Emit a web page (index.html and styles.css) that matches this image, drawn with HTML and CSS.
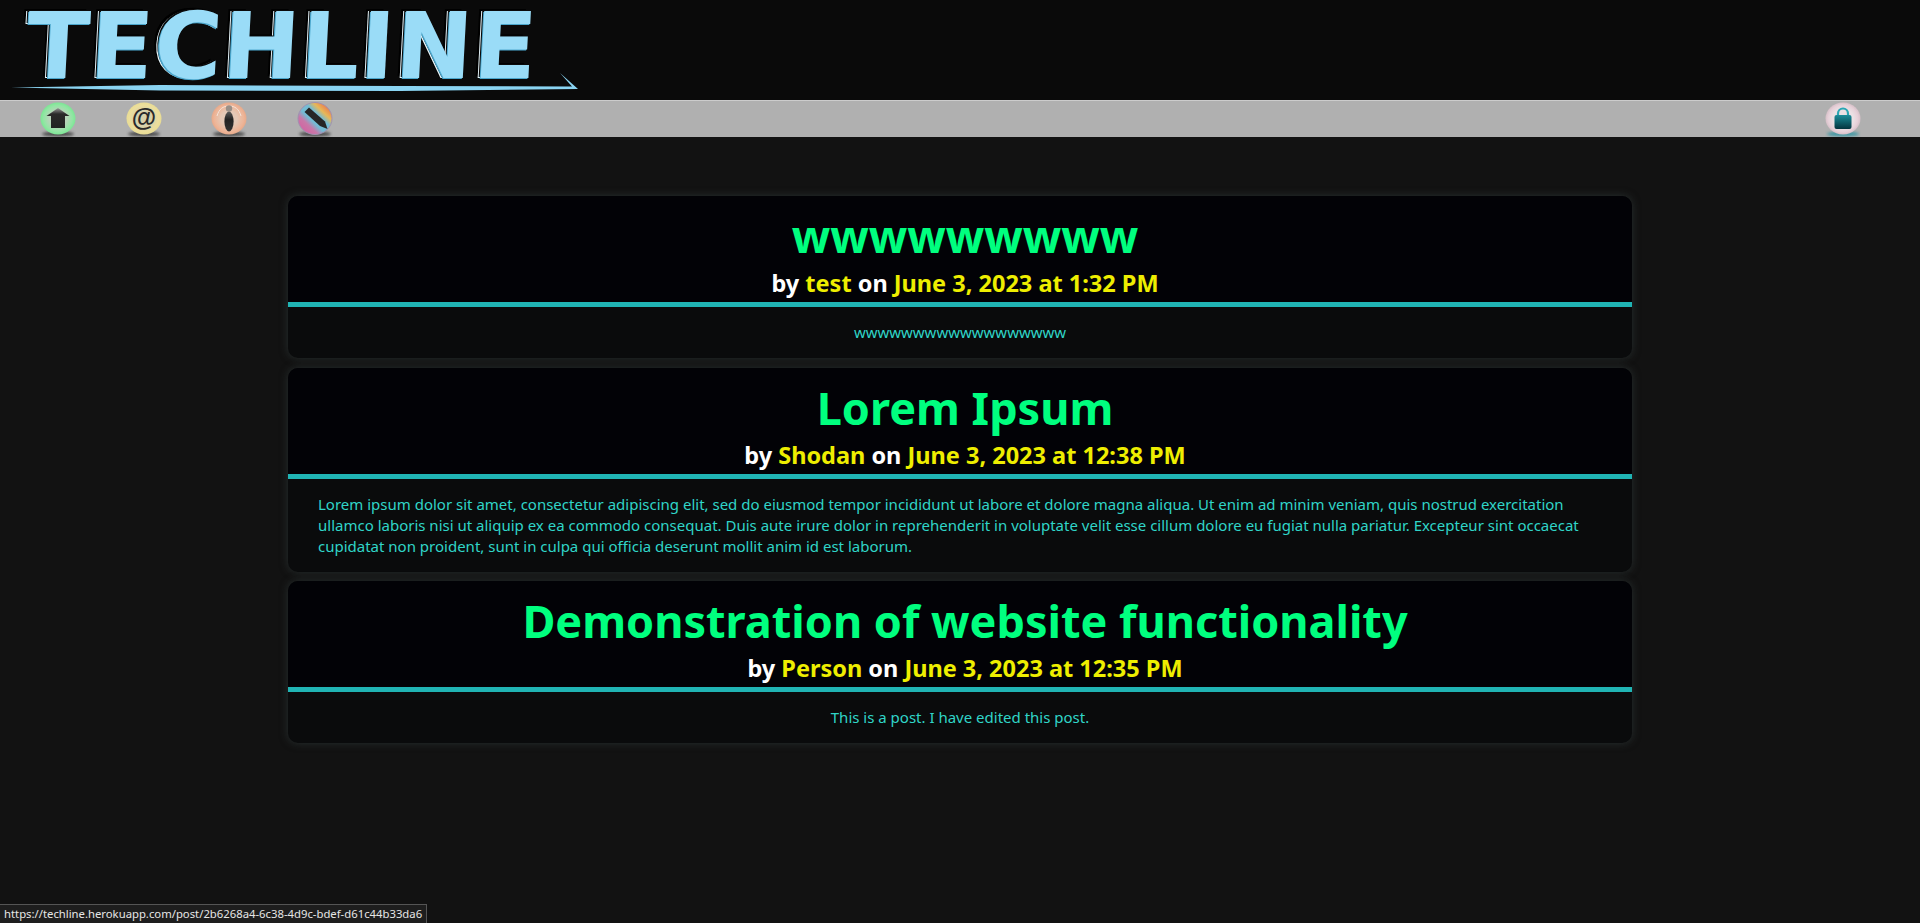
FILE: index.html
```html
<!DOCTYPE html>
<html>
<head>
	<title>Techline</title>
	<link rel="stylesheet" href="styles.css">
</head>
<body>
	<svg class="defs" width="0" height="0">
		<defs>
			<radialGradient id="g_green" cx="50%" cy="50%" r="50%"><stop offset="0.5" stop-color="#b8d4ba"/><stop offset="0.82" stop-color="#92e6a4"/><stop offset="1" stop-color="#7ce694"/></radialGradient>
			<radialGradient id="g_yellow" cx="50%" cy="50%" r="50%"><stop offset="0.5" stop-color="#d8d2ac"/><stop offset="0.82" stop-color="#ecde9c"/><stop offset="1" stop-color="#e8dc94"/></radialGradient>
			<radialGradient id="g_orange" cx="50%" cy="50%" r="50%"><stop offset="0.45" stop-color="#e4c8b6"/><stop offset="0.85" stop-color="#eeb496"/><stop offset="1" stop-color="#e6a98a"/></radialGradient>
			<radialGradient id="g_pink" cx="50%" cy="50%" r="50%"><stop offset="0.6" stop-color="#ebe0e4"/><stop offset="0.85" stop-color="#e6d0d8"/><stop offset="1" stop-color="#d6c0c8"/></radialGradient>
			<linearGradient id="g_lock" x1="0" y1="0" x2="0" y2="1"><stop offset="0" stop-color="#1b8d9a"/><stop offset="1" stop-color="#04343e"/></linearGradient>
			<linearGradient id="g_dark" x1="0" y1="0" x2="0" y2="1"><stop offset="0" stop-color="#9a9a9a"/><stop offset="0.3" stop-color="#2a2a2a"/><stop offset="1" stop-color="#222"/></linearGradient>
			<linearGradient id="g_tie" x1="0" y1="0" x2="0" y2="1"><stop offset="0" stop-color="#5a5a5a"/><stop offset="0.4" stop-color="#222"/><stop offset="1" stop-color="#333"/></linearGradient>
			<linearGradient id="g_rainbow" x1="0" y1="1" x2="1" y2="0"><stop offset="0.05" stop-color="#d85aa0"/><stop offset="0.3" stop-color="#c878a8"/><stop offset="0.42" stop-color="#74bcd4"/><stop offset="0.6" stop-color="#74bcd4"/><stop offset="0.72" stop-color="#e8b858"/><stop offset="1" stop-color="#e84848"/></linearGradient>
			<filter id="blur2" x="-20%" y="-100%" width="140%" height="300%"><feGaussianBlur stdDeviation="1.500"/></filter>
		</defs>
	</svg>

	<header class="top">
		<a class="logo" href="#">
			<span class="logo-text">TECHLINE</span>
			<svg class="swoosh" width="600" height="30" viewBox="0 0 600 30">
				<path d="M11 15.500 L160 13 L400 14 L572 14.500 L560 1 L578 17 L400 19 L160 18.500 Z" fill="#8ad4f2"/>
			</svg>
		</a>
	</header>

	<nav class="bar">
		<a class="ico" href="#">
			<svg width="36" height="36" viewBox="0 0 36 36">
				<ellipse class="drop" cx="18" cy="33" rx="16" ry="2.500"/>
				<ellipse cx="18" cy="17.500" rx="17.500" ry="16" fill="url(#g_green)"/>
				<path d="M18 7 L29.500 15 H25 V27 H11 V15 H6.500 Z" fill="url(#g_dark)"/>
			</svg>
		</a>
		<a class="ico" href="#">
			<svg width="36" height="36" viewBox="0 0 36 36">
				<ellipse class="drop" cx="18" cy="33" rx="16" ry="2.500"/>
				<ellipse cx="18" cy="17.500" rx="17.500" ry="16" fill="url(#g_yellow)"/>
				<text class="at" x="18" y="25">@</text>
			</svg>
		</a>
		<a class="ico" href="#">
			<svg width="36" height="36" viewBox="0 0 36 36">
				<ellipse class="drop" cx="18" cy="33" rx="16" ry="2.500"/>
				<ellipse cx="18" cy="17.500" rx="17.500" ry="16" fill="url(#g_orange)"/>
				<path d="M6 15 C8 8 12 5 18 5 C24 5 28 8 30 15" fill="none" stroke="#f4e4da" stroke-width="1"/>
				<circle cx="18" cy="7.500" r="3.200" fill="#9a9088"/>
				<ellipse cx="18" cy="20.500" rx="4.600" ry="10" fill="url(#g_tie)"/>
			</svg>
		</a>
		<a class="ico" href="#">
			<svg width="36" height="36" viewBox="0 0 36 36">
				<ellipse class="drop" cx="18" cy="33" rx="16" ry="2.500"/>
				<ellipse cx="18" cy="17.500" rx="17" ry="16" fill="url(#g_rainbow)" stroke="#a090b0" stroke-width="1"/>
				<path d="M7.500 11 L12 6.500 L28 20.500 L30.500 28 L23 25 Z" fill="#262626"/>
			</svg>
		</a>
		<a class="ico ico-right" href="#">
			<svg width="36" height="36" viewBox="0 0 36 36">
				<ellipse class="drop drop-teal" cx="18" cy="33" rx="16" ry="2.500"/>
				<ellipse cx="18" cy="17.500" rx="17.500" ry="16" fill="url(#g_pink)"/>
				<path d="M13 15 V12.500 a5 5 0 0 1 10 0 V15" fill="none" stroke="#2aa6b4" stroke-width="2.200"/>
				<rect x="9.500" y="14" width="17" height="14" rx="2" fill="url(#g_lock)"/>
			</svg>
		</a>
	</nav>

	<main class="posts">
		<article class="card">
			<div class="card-head">
				<h1 class="judul">wwwwwwwww</h1>
				<h4 class="meta">by <a href="#">test</a> on <a href="#">June 3, 2023 at 1:32 PM</a></h4>
			</div>
			<div class="card-body center">wwwwwwwwwwwwwwwwww</div>
		</article>
		<article class="card">
			<div class="card-head">
				<h1 class="judul">Lorem Ipsum</h1>
				<h4 class="meta">by <a href="#">Shodan</a> on <a href="#">June 3, 2023 at 12:38 PM</a></h4>
			</div>
			<div class="card-body">Lorem ipsum dolor sit amet, consectetur adipiscing elit, sed do eiusmod tempor incididunt ut labore et dolore magna aliqua. Ut enim ad minim veniam, quis nostrud exercitation ullamco laboris nisi ut aliquip ex ea commodo consequat. Duis aute irure dolor in reprehenderit in voluptate velit esse cillum dolore eu fugiat nulla pariatur. Excepteur sint occaecat cupidatat non proident, sunt in culpa qui officia deserunt mollit anim id est laborum.</div>
		</article>
		<article class="card">
			<div class="card-head">
				<h1 class="judul">Demonstration of website functionality</h1>
				<h4 class="meta">by <a href="#">Person</a> on <a href="#">June 3, 2023 at 12:35 PM</a></h4>
			</div>
			<div class="card-body center">This is a post. I have edited this post.</div>
		</article>
	</main>

	<div class="status">https://techline.herokuapp.com/post/2b6268a4-6c38-4d9c-bdef-d61c44b33da6</div>
</body>
</html>
```

FILE: styles.css
```css
html, body {
	margin: 0;
	height: 100%;
}
body {
	background-color: #121212;
	font-family: "Noto Sans", sans-serif;
	overflow: hidden;
}
a {
	text-decoration: none;
	color: inherit;
}
.defs {
	position: absolute;
}

.top {
	height: 100px;
	background-color: #0a0a0a;
}
.logo {
	position: relative;
	display: block;
	height: 100px;
}
.logo-text {
	display: inline-block;
	padding: 3px 0 0 27px;
	font-family: "DejaVu Sans", sans-serif;
	font-weight: bold;
	font-size: 92px;
	line-height: 88px;
	letter-spacing: 1px;
	white-space: nowrap;
	color: #9adcf7;
	transform: skewX(-3deg);
	text-shadow: -1px 1px 0 #4aa6cc, -2px -1px 0 #0a0a0a, -3px 0 0 #e8f6fb, -5px -2px 0 #000;
}
.swoosh {
	position: absolute;
	left: 0;
	top: 72px;
}

.bar {
	display: flex;
	gap: 49.500px;
	height: 36px;
	padding-left: 40px;
	padding-right: 59px;
	background-color: #b0b0b0;
	border-top: 1px solid #ccc;
}
.ico {
	display: block;
	width: 36px;
	height: 36px;
}
.ico-right {
	margin-left: auto;
}
.drop {
	fill: #4a4a4a;
	filter: url(#blur2);
}
.drop-teal {
	fill: #3f98a4;
}
.at {
	font-family: "Liberation Sans", sans-serif;
	font-size: 25px;
	font-weight: bold;
	text-anchor: middle;
	fill: #2a2a2a;
}

.posts {
	display: flex;
	flex-direction: column;
	gap: 9.600px;
	width: 70%;
	margin: 59px auto 0;
}
.card {
	border-radius: 10px;
	overflow: hidden;
	background-color: #0a0b0c;
	box-shadow: 0 0 8px rgba(50, 60, 60, 0.7);
}
.card-head {
	background-color: #020206;
	border-bottom: 5px solid #20b4b4;
	text-align: center;
	padding: 0 0 3px 10px;
}
.judul {
	margin: 0;
	padding-top: 8px;
	font-size: 45px;
	line-height: 64px;
	font-weight: bold;
	color: #00ff7f;
}
.meta {
	margin: 0;
	font-size: 23.500px;
	line-height: 31px;
	font-weight: bold;
	color: #fff;
}
.meta a {
	color: #eeee00;
}
.card-body {
	padding: 15px 30px;
	font-size: 15px;
	line-height: 21px;
	color: #30d5c8;
}
.center {
	text-align: center;
}

.status {
	position: fixed;
	left: 0;
	bottom: 0;
	padding: 1px 4px 1px 4px;
	font-size: 11.300px;
	line-height: 16px;
	color: #e6e6e6;
	background-color: #1e1e1e;
	border-top: 1px solid #555;
	border-right: 1px solid #555;
}
```
